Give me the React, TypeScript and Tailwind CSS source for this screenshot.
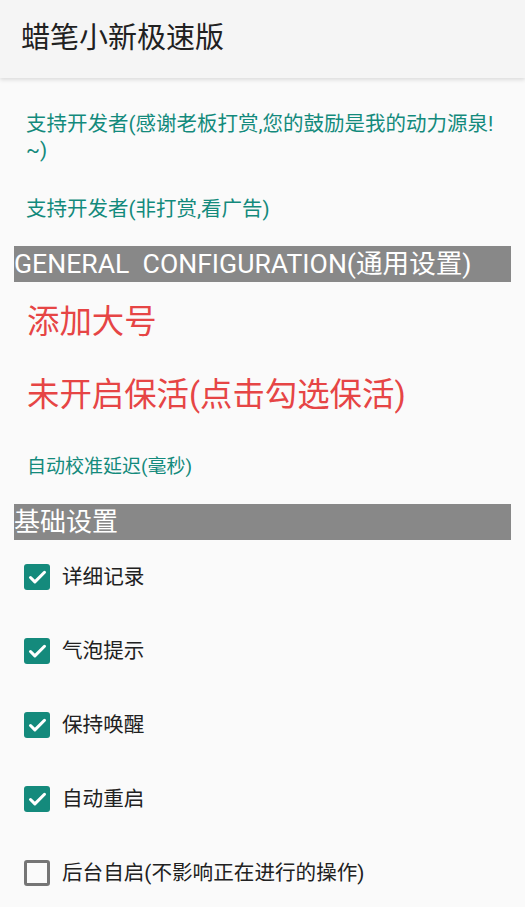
import { Check } from 'lucide-react';

const checks = [
  { label: '详细记录', checked: true },
  { label: '气泡提示', checked: true },
  { label: '保持唤醒', checked: true },
  { label: '自动重启', checked: true },
  { label: '后台自启(不影响正在进行的操作)', checked: false },
];

function Box({ checked }: { checked: boolean }) {
  if (checked) {
    return (
      <div className="flex h-[26px] w-[26px] shrink-0 items-center justify-center rounded-[3px] bg-[#148a7c]">
        <Check className="h-[21px] w-[21px] text-white" strokeWidth={3.5} />
      </div>
    );
  }
  return <div className="h-[26px] w-[26px] shrink-0 rounded-[3px] border-[3px] border-[#757575]" />;
}

export default function App() {
  return (
    <div
      className="min-h-[907px] w-[525px] bg-[#fafafa]"
      style={{ fontFamily: "Roboto, 'Noto Sans CJK SC', sans-serif" }}
    >
      <header className="flex h-[78px] items-center bg-[#f5f5f5] pl-[21px] shadow-[0_2px_4px_rgba(0,0,0,0.12)]">
        <h1 className="text-[29px] text-[#212121]">蜡笔小新极速版</h1>
      </header>

      <div className="px-[14px]">
        <div className="px-[12px] pt-[33px] text-[20.5px] leading-[26px] text-[#138a7c]">
          支持开发者(感谢老板打赏,您的鼓励是我的动力源泉!
          <br />
          ~)
        </div>
        <div className="px-[12px] pt-[33px] text-[20.5px] leading-[26px] text-[#138a7c]">
          支持开发者(非打赏,看广告)
        </div>

        <div className="mt-[24px] flex h-[36px] items-center bg-[#888888] text-[26.6px] leading-none whitespace-pre text-white">
          GENERAL  CONFIGURATION(通用设置)
        </div>

        <div className="px-[13px] pt-[20px] text-[32.4px] leading-[40px] text-[#e64545]">添加大号</div>
        <div className="px-[13px] pt-[33px] text-[32.4px] leading-[40px] text-[#e64545]">未开启保活(点击勾选保活)</div>

        <div className="px-[13px] pt-[40px] text-[19px] leading-[24px] text-[#138a7c]">自动校准延迟(毫秒)</div>

        <div className="mt-[25px] flex h-[36px] items-center bg-[#888888] text-[26px] leading-none text-white">
          基础设置
        </div>

        <div className="flex flex-col">
          {checks.map((c) => (
            <div key={c.label} className="flex h-[74px] items-center gap-[12px] pl-[10px]">
              <Box checked={c.checked} />
              <span className="text-[20.6px] leading-[26px] text-[#212121]">{c.label}</span>
            </div>
          ))}
        </div>
      </div>
    </div>
  );
}
